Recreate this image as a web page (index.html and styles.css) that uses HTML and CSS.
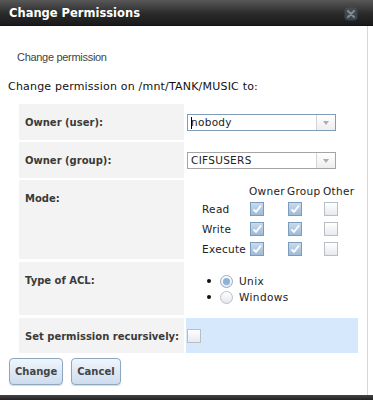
FILE: index.html
```html
<!DOCTYPE html>
<html>
<head>
    <title>Change Permissions</title>
    <meta charset="UTF-8">
<link rel="stylesheet" href="styles.css">
</head>
<body>
<div class="dialog">
    <div class="titlebar">
        <span class="title">Change Permissions</span>
        <svg class="close" width="14" height="14" viewBox="0 0 14 14">
            <rect x="0.5" y="0.5" width="13" height="13" rx="4" fill="#4a525a" opacity="0.7"/>
            <path d="M4 4 L10 10 M10 4 L4 10" stroke="#7d8995" stroke-width="2.2" stroke-linecap="round"/>
        </svg>
    </div>

    <div class="content">
        <p class="intro">Change permission</p>
        <p class="path">Change permission on /mnt/TANK/MUSIC to:</p>

        <div class="form">
            <div class="label row-user">Owner (user):</div>
            <div class="value row-user">
                <div class="select focus">
                    <span class="select-text"><span class="cursor"></span>nobody</span>
                    <span class="select-arrow"><span class="tri"></span></span>
                </div>
            </div>

            <div class="label row-group">Owner (group):</div>
            <div class="value row-group">
                <div class="select">
                    <span class="select-text">CIFSUSERS</span>
                    <span class="select-arrow"><span class="tri"></span></span>
                </div>
            </div>

            <div class="label row-mode">Mode:</div>
            <div class="value row-mode">
                <div class="mode">
                    <span class="head"></span><span class="head">Owner</span><span class="head">Group</span><span class="head">Other</span>

                    <span>Read</span>
                    <span class="cb on"><svg width="12" height="12" viewBox="0 0 12 12"><path d="M2.5 6.5 L5 9 L10 2.5" stroke="#fff" stroke-width="1.8" fill="none"/></svg></span>
                    <span class="cb on"><svg width="12" height="12" viewBox="0 0 12 12"><path d="M2.5 6.5 L5 9 L10 2.5" stroke="#fff" stroke-width="1.8" fill="none"/></svg></span>
                    <span class="cb"></span>

                    <span>Write</span>
                    <span class="cb on"><svg width="12" height="12" viewBox="0 0 12 12"><path d="M2.5 6.5 L5 9 L10 2.5" stroke="#fff" stroke-width="1.8" fill="none"/></svg></span>
                    <span class="cb on"><svg width="12" height="12" viewBox="0 0 12 12"><path d="M2.5 6.5 L5 9 L10 2.5" stroke="#fff" stroke-width="1.8" fill="none"/></svg></span>
                    <span class="cb"></span>

                    <span>Execute</span>
                    <span class="cb on"><svg width="12" height="12" viewBox="0 0 12 12"><path d="M2.5 6.5 L5 9 L10 2.5" stroke="#fff" stroke-width="1.8" fill="none"/></svg></span>
                    <span class="cb on"><svg width="12" height="12" viewBox="0 0 12 12"><path d="M2.5 6.5 L5 9 L10 2.5" stroke="#fff" stroke-width="1.8" fill="none"/></svg></span>
                    <span class="cb"></span>
                </div>
            </div>

            <div class="label row-acl">Type of ACL:</div>
            <div class="value row-acl">
                <ul class="radios">
                    <li><span class="radio on"></span>Unix</li>
                    <li><span class="radio"></span>Windows</li>
                </ul>
            </div>

            <div class="label row-rec">Set permission recursively:</div>
            <div class="value row-rec active">
                <span class="cb"></span>
            </div>
        </div>

        <div class="buttons">
            <button class="btn">Change</button>
            <button class="btn">Cancel</button>
        </div>
    </div>
    <div class="bottombar"></div>
</div>
</body>
</html>
```

FILE: styles.css
```css
/* Page */
* {
  box-sizing: border-box;
}

body {
  margin: 0;
  background: #fff;
  font-family: "DejaVu Sans", Verdana, sans-serif;
  color: #222;
}

.dialog {
  width: 373px;
  height: 400px;
  display: flex;
  flex-direction: column;
  overflow: hidden;
}

/* Title bar */
.titlebar {
  height: 26px;
  flex: none;
  display: flex;
  align-items: center;
  justify-content: space-between;
  padding: 0 15px 0 9px;
  background: linear-gradient(#585858, #2a2a2a 55%, #1a1a1a);
  border-bottom: 1px solid #111;
}

.title {
  color: #fff;
  font-weight: bold;
  font-size: 11.5px;
  letter-spacing: 0;
}

.close {
  margin-top: 2px;
}

/* Body */
.content {
  flex: 1;
  border-right: 1px solid #d8d8d8;
  width: 368px;
}

.intro {
  margin: 25px 0 0 17px;
  font-family: "Liberation Sans", Arial, sans-serif;
  font-size: 11px;
  letter-spacing: -0.3px;
  color: #444;
  line-height: 13px;
}

.path {
  margin: 16px 0 0 8px;
  font-size: 11px;
  letter-spacing: 0.2px;
  line-height: 13px;
  color: #111;
}

/* Form grid */
.form {
  display: grid;
  grid-template-columns: 165px 172px;
  column-gap: 2px;
  margin: 11px 0 0 19px;
}

.label {
  background: #f3f3f3;
  font-weight: bold;
  font-size: 10px;
  color: #3a3a3a;
  padding: 13px 0 0 6px;
  line-height: 12px;
}

.value {
  padding-left: 1px;
}

.row-user { height: 36px; margin-bottom: 2px; }
.row-group { height: 36px; margin-bottom: 2px; }
.row-mode { height: 79px; margin-bottom: 3px; }
.row-acl { height: 53px; margin-bottom: 3px; }
.row-rec { height: 35px; }

.value.row-user, .value.row-group { padding-top: 10px; }
.value.row-mode { padding-top: 2px; }
.value.row-acl { padding-top: 11px; }
.value.row-rec { padding-top: 10px; }

.active {
  background: #d6e8fc;
}

/* Select box */
.select {
  width: 149px;
  height: 17px;
  border: 1px solid #a5a5a5;
  display: flex;
  background: #fff;
  font-size: 10.5px;
}

.select.focus {
  border-color: #7f9db9;
}

.select-text {
  flex: 1;
  padding-left: 3px;
  line-height: 15px;
  display: flex;
  align-items: center;
  letter-spacing: 0.3px;
}

.cursor {
  width: 1px;
  height: 12px;
  background: #000;
  margin-right: -1px;
}

.select-arrow {
  width: 19px;
  border-left: 1px solid #d4d4d4;
  background: linear-gradient(#fff, #eee);
  display: flex;
  align-items: center;
  justify-content: center;
}

.tri {
  width: 0;
  height: 0;
  border-left: 3px solid transparent;
  border-right: 3px solid transparent;
  border-top: 4px solid #aab;
}

/* Mode table */
.mode {
  display: grid;
  grid-template-columns: 47px 38px 36px 34px;
  grid-template-rows: 17px 20px 20px 19px;
  align-items: center;
  margin-left: 15px;
  font-size: 10.5px;
  letter-spacing: 0.3px;
  color: #222;
}

.cb {
  display: inline-block;
  width: 14px;
  height: 14px;
  border: 1px solid #b8bec6;
  background: linear-gradient(#fff, #e6e9ee);
}

.mode .cb {
  margin-left: 1px;
}

.cb.on {
  border-color: #7c9cbd;
  background: linear-gradient(#c9daec, #9dbad8);
}

.cb svg {
  display: block;
}

/* Radios */
.radios {
  margin: 0;
  padding: 0 0 0 20px;
  list-style: none;
  font-size: 10.5px;
  letter-spacing: 0.4px;
}

.radios li {
  display: flex;
  align-items: center;
  height: 16px;
  padding-left: 13px;
  position: relative;
}

.radios li::before {
  content: "";
  position: absolute;
  left: 0;
  top: 6px;
  width: 4px;
  height: 4px;
  border-radius: 50%;
  background: #111;
}

.radio {
  width: 13px;
  height: 13px;
  border: 1px solid #b8c0ca;
  border-radius: 50%;
  background: linear-gradient(#fff, #e4e7eb);
  margin-right: 6px;
  display: flex;
  align-items: center;
  justify-content: center;
}

.radio.on {
  border-color: #8eaccc;
}

.radio.on::after {
  content: "";
  width: 7px;
  height: 7px;
  border-radius: 50%;
  background: #8cb2da;
}

/* Buttons */
.buttons {
  display: flex;
  gap: 8px;
  margin: 5px 0 0 9px;
}

.btn {
  height: 27px;
  padding: 0 5px;
  border: 1px solid #8fa6bf;
  border-radius: 4px;
  background: linear-gradient(#f0f5fc, #cddcee);
  font-family: "DejaVu Sans", Verdana, sans-serif;
  font-weight: bold;
  font-size: 10px;
  color: #444;
  box-shadow: 0 1px 1px rgba(0, 0, 0, 0.15);
}

.bottombar {
  height: 5px;
  flex: none;
  background: linear-gradient(#444, #222);
}
```
